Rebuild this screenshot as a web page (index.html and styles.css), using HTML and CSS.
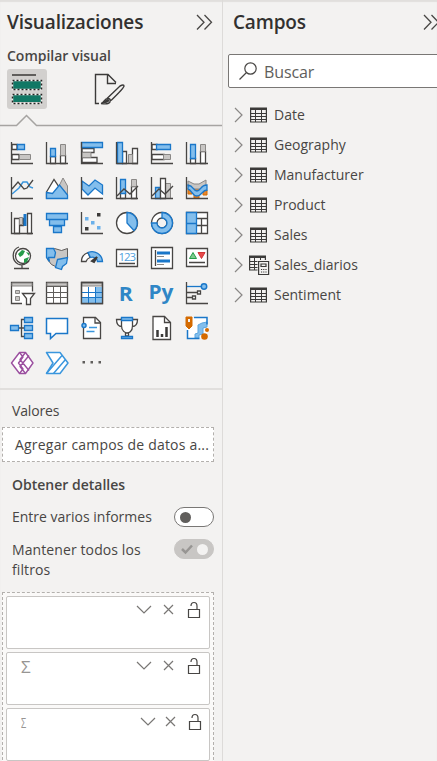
FILE: index.html
```html
<!DOCTYPE html>
<html lang="es">
<head>
<meta charset="utf-8">
<title>Visualizaciones</title>
<link rel="stylesheet" href="styles.css">
</head>
<body>
<div class="app">
<section class="pane viz">
  <header class="head"><h1 class="t-viz">Visualizaciones</h1>
    <svg class="collapse" width="17" height="17" viewBox="0 0 17 17"><path d="M1 1l7 7.3-7 7.2M8.500 1l7 7.300-7 7.200"/></svg></header>
  <h2 class="sub">Compilar visual</h2>
  <div class="tabs">
    <span class="tab active"><svg width="40" height="40"><path d="M5 6h24" stroke="#605e5c" stroke-width="2"/><path d="M6 12h28v8H6zM6 26h28v7H6z" fill="#117865"/><path d="M5.500 11.500h29v9h-29zM5.500 25.500h29v9h-29z" fill="none" stroke="#f3f2f1" stroke-width="1.500"/><path d="M5.500 11.500h29v9h-29zM5.500 25.500h29v9h-29z" fill="none" stroke="#252423" stroke-width="1.500" stroke-dasharray="2 2"/></svg></span>
    <svg class="tab format" width="40" height="40"><g fill="none" stroke="#3b3a39" stroke-width="1.400"><path d="M12 34.500H8.500V5.500H21l8 8M20.500 6v8.500H29M14 34.500c3 0 3-5 7-5 3 0 3 4 0 5-2 .7-4 .5-7 0zM20 29.500L33 17q4-2 4 0 0 2-13 14.500"/></g><path d="M14 34c3 0 4-4 7-4 3 1 1 5-7 4z" fill="#3b3a39"/></svg>
  </div>
  <svg class="pointer" width="222" height="14"><path d="M0 11.500h16.500l10-10 10 10H222" fill="none" stroke="#a6a4a2" stroke-width="1.500"/></svg>
  <div class="gallery">
    <svg><path class="w" d="M2 3.500h5v5H2z"/><path class="b" d="M7.500 3.500h7v5h-7z"/><path class="w" d="M2 13.500h7v5H2z"/><path class="g" d="M9.500 13.500h11v5h-11z"/><path class="k" d="M1.500 1v21.500H23"/></svg>
    <svg><path class="w" d="M5.500 15.500h5v7h-5zM15.500 14.500h5v8h-5z"/><path class="b" d="M5.500 7.500h5v8h-5z"/><path class="g" d="M15.500 3.500h5v11h-5z"/><path class="k" d="M1.500 1v21.500H23"/></svg>
    <svg><path class="w" d="M2 7.500h12v4H2zM2 16.500h15v5H2z"/><path class="g" d="M2 11.500h9v5H2z"/><path class="b" d="M1.500 1.500h21v5h-21z"/><path class="k" d="M1.500 1v21.500H23"/></svg>
    <svg><path class="w" d="M7.500 10.500h4v12h-4zM17.500 7.500h5v15h-5z"/><path class="g" d="M13.500 13.500h4v9h-4z"/><path class="b" d="M2.500 1.500h5v21h-5z"/><path class="k" d="M1.500 1v21.500H23"/></svg>
    <svg><path class="w" d="M2 3.500h5v5H2zM2 13.500h12v5H2z"/><path class="b" d="M6.500 3.500h14v5h-14z"/><path class="g" d="M13.500 13.500h7v5h-7z"/><path class="k" d="M1.500 1v21.500H23"/></svg>
    <svg><path class="w" d="M5.500 17.500h5v5h-5zM15.500 10.500h5v12h-5z"/><path class="b" d="M5.500 3.500h5v14h-5z"/><path class="g" d="M15.500 3.500h5v7h-5z"/><path class="k" d="M1.500 1v21.500H23"/></svg>

    <svg><path class="bl" d="M2 18l7-6 4-6h4l3 5 3 1"/><path class="k" d="M2 13l6-7 6 7 3-1 6-8M1.500 1v21.500H23"/></svg>
    <svg><path class="g" d="M12 14l6-12 4.500 8v12H12z"/><path class="w" d="M1.500 16L9 3.500 16 14 9 22H1.500z"/><path class="b" d="M1.500 16.500l6 1 7-8.500 8 10v3.500h-21z"/></svg>
    <svg><path class="w" d="M2 12l7 5 6-5 8 7v3H2z" style="stroke:none"/><path class="b" d="M2 5l7 5 6-6 7.500 5v9L15 12l-7 7-6-6z"/><path class="k" d="M1.500 1v21.500H23"/></svg>
    <svg><path class="w" d="M5.500 15.500h5v7h-5zM16.500 10.500h5v12h-5z"/><path class="b" d="M5.500 3.500h5v14h-5z"/><path class="g" d="M16.500 3.500h5v7h-5z"/><path class="k" d="M1.500 1v21.500H23M2 20l7-7 6 5 8-8" /></svg>
    <svg><path class="b" d="M5.500 11.500h5v11h-5z"/><path class="g" d="M15.500 7.500h5v15h-5z"/><path class="w" d="M10.500 2.500h5v20h-5z"/><path class="k" d="M1.500 1v21.500H23M2 20l7-7 6 5 8-8"/></svg>
    <svg><path d="M3 12h4v6H3zM9 11h6v4H9zM9 19h5v3H9zM18 14h4v5h-4z" fill="#e8862c" stroke="#d46a00"/><path class="g" d="M3 5l6 3h5l7-4v6l-6 3H9L3 10z"/><path class="b" d="M3 9c6 1 5 6 9 6s3-6 10-6v5c-5 0-5 6-10 6s-5-6-9-7z"/><path class="k" d="M1.500 1v21.500H23"/></svg>

    <svg><path class="w" d="M4.500 7.500h5v15h-5zM9.500 7.500h4v7h-4zM17.500 2.500h4v20h-4z"/><path class="g" d="M9.500 6.500h3v7h-3z"/><path d="M15 3v12" stroke="#1a77c9" stroke-width="3"/><path class="k" d="M1.500 1v21.500H23"/></svg>
    <svg><path class="b" d="M1.500 2.500h21v6h-21zM4.500 8.500h15v6h-15zM8.500 15.500h8v6h-8z"/></svg>
    <svg><path class="k" d="M1.500 1v21.500H23"/><path d="M5 6h3.500v3.500H5zM11 10h3.500v3.500H11zM17 15h3.500v3.500H17z" fill="#6bb0ea"/><path d="M17 2h3.500v3.500H17zM5 16h3.500v3.500H5z" fill="#3b3a39"/></svg>
    <svg><circle class="w" cx="12" cy="12" r="10.500"/><path class="b" d="M12 1.500V12l7 7.500A10.500 10.500 0 0 0 12 1.500z"/></svg>
    <svg><path class="w" fill-rule="evenodd" d="M12 1.500a10.500 10.500 0 1 0 .1 0zM12 7a5 5 0 1 1-.1 0z"/><path class="b" d="M12 1.500A10.500 10.500 0 1 1 1.500 12H7a5 5 0 1 0 5-5z"/></svg>
    <svg><path class="w" d="M1.500 1.500h21v21h-21zM12 7.500h10.500M12 14.500h4M16.500 7.500v15M16.500 14.500h6"/><path class="b" d="M1.500 1.500h10v21h-10zM1.500 12.500h10"/></svg>

    <svg><circle cx="13" cy="10" r="7.500" class="w"/><path d="M8 8l4-4 3 1-2 4-3 2zM14 13l5-2-2 5-3 1zM16 6l3 1v3z" fill="#259c4a"/><path class="k" d="M9 1C2 3 1 14 8 18c4 2 9 0 11-3M12 19v3M4 22.500h15"/></svg>
    <svg><path class="g" d="M1.500 3.500l8-1 7 2 6-2v9l-4 5-6 5-6-3-4-5z" style="stroke:#605e5c"/><path class="b" d="M1.500 2.500l7 0 2 4-1 5h-6l1 4-3-4zM12.500 13.500l10-2-1 6-4 3-1 3-6-2z"/></svg>
    <svg><path class="w" d="M1.500 15.500A10.500 9.500 0 0 1 8 6.500l2 5q-3 1-4 4z"/><path class="b" d="M8 6.500a10.500 10.500 0 0 1 14.500 9h-5c0-3-4-5-7-4z"/><path d="M12 15l5-4-3 5z" fill="#3b3a39" stroke="#3b3a39" stroke-width="2"/></svg>
    <svg><path class="w" d="M1.500 3.500h21v17h-21zM4 17.500h16"/><text x="3.500" y="15" font-size="11.500" fill="#4f9fdd" textLength="17.500">123</text></svg>
    <svg><path class="w" d="M1.500 1.500h21v21h-21z" /><path class="k" d="M5.500 4v16"/><path d="M7 7h13M7 15h13" stroke="#1a77c9" stroke-width="3"/><path class="g" d="M7 10.500h7M7 18.500h7"/></svg>
    <svg><path class="w" d="M1.500 2.500h21v18h-21zM4 16.500h16"/><path d="M4.500 12.500h7L8 6.500z" fill="#7ccb8d" stroke="#259c4a"/><path d="M13 6.500h7l-3.500 6z" fill="#e84b4b" stroke="#d13438"/></svg>

    <svg><path class="w" d="M1.500 1.500h21v10L15 22.500H1.500z" style="stroke:none"/><path class="k" d="M12 22.500H1.500v-21h21v9"/><path class="g" d="M2 2h20v3H2zM5.500 9.500h4v3h-4zM5.500 15.500h4v4h-4z"/><path class="w" d="M12.500 12.500h12l-4 5v6h-4v-6z"/></svg>
    <svg><path class="w" d="M1.500 1.500h21v21h-21z"/><path class="g" d="M2 2h20v3H2z"/><path class="k thin" d="M1.500 5.500h21M1.500 11.500h21M1.500 16.500h21M8.500 5v17M15.500 5v17"/></svg>
    <svg><path class="w" d="M1.500 1.500h21v21h-21z"/><path d="M15 6h7v16H2v-5h13z" fill="#83beec"/><path class="g" d="M2 2h20v3H2z"/><path d="M2 11.500h20M2 16.500h20M8.500 6v16M15.500 6v16" stroke="#1a77c9"/><path class="k" d="M1.500 1.500h21v21h-21z"/></svg>
    <svg><text x="3.800" y="19.500" font-size="20" textLength="14" lengthAdjust="spacingAndGlyphs" class="lang">R</text></svg>
    <svg><text x="-1.500" y="18" font-size="20" textLength="25" lengthAdjust="spacingAndGlyphs" class="lang">Py</text></svg>
    <svg><path class="k" d="M1.500 1v21.500H23M2 11.500h11M2 16.500h6"/><path d="M2 5.500h16" stroke="#1a77c9" stroke-width="1.300"/><circle cx="19" cy="5.500" r="2.700" fill="#83beec" stroke="#1a77c9" stroke-width="1.500"/><path class="w" d="M12.500 10h3v3h-3zM7.500 15h3v3h-3z"/></svg>

    <svg><path class="k" d="M9 12h6M15 3.500h-3.500v17H15"/><path class="b" d="M.5 9.500h8v5h-8zM14.500 1.500h8v5h-8zM14.500 9.500h8v5h-8zM14.500 17.500h8v5h-8z"/></svg>
    <svg><path d="M1.500 2.500h21v15H11l-5.500 5v-5h-4z" fill="#fff" stroke="#1a77c9" stroke-width="1.500"/></svg>
    <svg><path class="w" d="M3.500 1.500h12l5 5v16h-17z"/><path class="k" d="M15 1.500v5.500h5.500"/><circle cx="4" cy="9.500" r="2" fill="#83beec" stroke="#1a77c9" stroke-width="1.500"/><path d="M9 11.500h8M6.500 15.500h8" stroke="#3a96dd" stroke-width="1.300"/></svg>
    <svg><path class="w" d="M6.500 2.500h11V10c0 6-4 7-5.500 7s-5.500-2-5.500-7zM6.500 3.500h-5c0 5 2 7 5.500 7M17.500 3.500h5c0 5-2 7-5.500 7M10.500 17v3h3v-3"/><path class="b" d="M6.500 1.500h11v3h-11zM6.500 20.500h11v2h-11z"/></svg>
    <svg><path class="w" d="M3 .5h11.500l6 6v17H3z"/><path class="k" d="M14.500.5v6h6"/><path d="M7.500 14v7M12 18v3M16.500 11v10" stroke="#3b3a39" stroke-width="2.500"/></svg>
    <svg><path class="w" d="M2 2h20v20H2z" style="stroke:none"/><path d="M10 22v-4l3-1V9l4-2 5-1v5l-4 1v6l-4 1v3z" fill="#83beec" stroke="#5ba5df"/><path d="M9 1.500h13v7M2.500 14v8.500h12" fill="none" stroke="#1a77c9" stroke-width="1.500"/><path d="M1 1h6v9l-3 3-3-3z" fill="#d46a00" stroke="#d46a00"/><path d="M3 3h2v3H3z" fill="#f3f2f1"/><circle cx="22" cy="14" r="2" fill="#d46a00"/><circle cx="19.500" cy="20.500" r="3.300" fill="#d46a00"/></svg>

    <svg><g fill="#fff" stroke="#9b4f9f" stroke-width="1.400" stroke-linejoin="round"><path d="M9.500 1.500h6L23 12l-7.500 10.500h-6L1.500 12z"/><path d="M9.500 1.500L13 6l-4.500 6 4.500 6-3.500 4.500M15.500 1.500L10 8.500l9 11M15.500 22.500L10 15.500l9-11" fill="none"/></g></svg>
    <svg><g fill="#fff" stroke="#3a96dd" stroke-width="1.500" stroke-linejoin="round"><path d="M1.500 1.500h13.500L23 12l-8 10.500H1.500L8 12z"/><path d="M1.500 22.500L17 4.500M8.500 22.500L20.500 8.500" fill="none"/></g></svg>
    <svg><path d="M2.500 10h2.500v2.500H2.500zM10.500 10H13v2.500h-2.500zM18.500 10H21v2.500h-2.500z" fill="#605e5c"/></svg>
  </div>
  <div class="wells">
    <div class="label t-val">Valores</div>
    <div class="drop"><span>Agregar campos de datos a...</span></div>
    <h3 class="label t-det">Obtener detalles</h3>
    <div class="option"><span class="t-ent">Entre varios informes</span><i class="toggle"></i></div>
    <div class="option tall"><span class="t-man">Mantener todos los<br>filtros</span><i class="toggle on"><svg width="14" height="12"><path d="M2 6l3.500 3.500L12 2.500" fill="none" stroke="#979593" stroke-width="2.500"/></svg></i></div>
    <div class="filters">
      <div class="card"><svg width="66" height="18"><path d="M1 5l7 7 7-7M28 4l9 9M37 4l-9 9"/><path class="lock" d="M52.500 8.500h11v8h-11zM55 5q0-3.500 3-3.500t3 3.500v3"/></svg></div>
      <div class="card"><b>Σ</b><svg width="66" height="18"><path d="M1 5l7 7 7-7M28 4l9 9M37 4l-9 9"/><path class="lock" d="M52.500 8.500h11v8h-11zM55 5q0-3.500 3-3.500t3 3.500v3"/></svg></div>
      <div class="card cut"><b>Σ</b><svg width="62" height="18"><path d="M1 5l7 7 7-7M26 4l9 9M35 4l-9 9"/><path class="lock" d="M49.500 8.500h11v8h-11zM52 5q0-3.500 3-3.500t3 3.500v3"/></svg></div>
    </div>
  </div>
</section>
<section class="pane fields">
  <header class="head"><h1 class="t-cam">Campos</h1>
    <svg class="collapse" width="17" height="17" viewBox="0 0 17 17"><path d="M1 1l7 7.300-7 7.200M8.500 1l7 7.300-7 7.200"/></svg></header>
  <div class="search"><svg width="20" height="20"><g fill="none" stroke="#484644" stroke-width="1.200"><circle cx="12.500" cy="7.500" r="5.700"/><path d="M8.500 11.500L1.500 18.500"/></g></svg><span>Buscar</span></div>
  <svg width="0" height="0" class="defs"><defs>
    <g id="chev"><path d="M1 1l7 7-7 7" fill="none" stroke="#8a8886" stroke-width="1.200"/></g>
    <g id="tbl"><path d="M.6 1h15.800v14H.6z" fill="#f3f2f1" stroke="#3b3a39" stroke-width="1.200"/><path d="M1 2h15" stroke="#3b3a39" stroke-width="2"/><path d="M1 6.500h15M1 9.500h15M1 12.500h15M5.500 3v12M11.500 3v12" stroke="#3b3a39"/></g>
  </defs></svg>
  <ul class="tree">
    <li><svg class="chev"><use href="#chev"/></svg><svg class="tbl"><use href="#tbl"/></svg><span class="f1">Date</span></li>
    <li><svg class="chev"><use href="#chev"/></svg><svg class="tbl"><use href="#tbl"/></svg><span class="f2">Geography</span></li>
    <li><svg class="chev"><use href="#chev"/></svg><svg class="tbl"><use href="#tbl"/></svg><span class="f3">Manufacturer</span></li>
    <li><svg class="chev"><use href="#chev"/></svg><svg class="tbl"><use href="#tbl"/></svg><span class="f4">Product</span></li>
    <li><svg class="chev"><use href="#chev"/></svg><svg class="tbl"><use href="#tbl"/></svg><span class="f5">Sales</span></li>
    <li><svg class="chev"><use href="#chev"/></svg><svg class="tbl"><use href="#tbl" x="-1" y="-2"/><path d="M7.500 3h12v16h-12z" fill="#f3f2f1"/><path d="M8.600 4.500h10v13h-10zM11 7h5v2.500h-5z" fill="none" stroke="#3b3a39" stroke-width="1.200"/><path d="M11 12.500h6M11 15h6" stroke="#3b3a39" stroke-dasharray="1.200 1"/></svg><span class="f6">Sales_diarios</span></li>
    <li><svg class="chev"><use href="#chev"/></svg><svg class="tbl"><use href="#tbl"/></svg><span class="f7">Sentiment</span></li>
  </ul>
</section>
</div>
</body>
</html>
```
FILE: styles.css
```css
* { box-sizing: border-box; }
body { margin: 0; background: #f3f2f1; color: #484644; font: 14px/20px "Open Sans", "Noto Sans", sans-serif; overflow: hidden; }
h1, h2, h3, ul { margin: 0; padding: 0; font-weight: 600; }
svg { display: block; flex: none; overflow: visible; }
.app { display: flex; width: 437px; height: 761px; overflow: hidden; box-shadow: inset 0 2px 1px #e1dfdd; }
.pane { height: 761px; white-space: nowrap; }
.viz { width: 223px; flex: none; border-right: 1px solid #dddbd9; }
.fields { flex: 1; min-width: 0; }
.head { display: flex; justify-content: space-between; align-items: center; height: 44px; padding: 0 9px 0 7px; }
.fields .head { padding: 0 0 0 10px; }
.fields .collapse { margin-right: -3px; }
h1 { font-size: 19px; color: #323130; letter-spacing: -.17px; }
.collapse path { fill: none; stroke: #484644; stroke-width: 1.3; }
.sub { height: 25px; padding-left: 7px; font-size: 14px; line-height: 23px; letter-spacing: -.02px; }
.tabs { display: flex; gap: 40px; padding-left: 7px; }
.tab { width: 40px; height: 40px; }
.active { background: #d2d0ce; border-radius: 3px; }
.pointer { margin-top: 5px; }
.gallery { display: grid; grid-template-columns: repeat(6, 24px); gap: 11px; padding: 13px 0 0 10px; height: 260px; align-content: start; }
.gallery svg { width: 24px; height: 24px; }
.k { fill: none; stroke: #484644; stroke-width: 1.3; }
.k.thin { stroke: #605e5c; stroke-width: 1; }
.w { fill: #fff; stroke: #484644; stroke-width: 1.3; }
.g { fill: #c8c6c4; stroke: #8a8886; }
.b { fill: #83beec; stroke: #1a77c9; stroke-width: 1.3; }
.bl { fill: none; stroke: #3a96dd; stroke-width: 1.5; }
.lang { fill: #2f86c6; font-weight: 700; }
.wells { border-top: 2px solid #e1dfdd; padding: 11px 8px 0 2px; }
.label { padding-left: 10px; height: 20px; font-size: 14px; }
.t-val { letter-spacing: -.15px; }
.t-man { letter-spacing: .1px; }
.drop { height: 35px; margin: 6px 0 13px; padding-left: 12px; border: 1px dashed #b3b0ad; background: #fff; line-height: 34px; letter-spacing: .2px; }
.option { display: flex; justify-content: space-between; align-items: flex-start; padding-left: 10px; margin-top: 12px; height: 20px; }
.option.tall { height: 40px; margin-top: 13px; }
.toggle { width: 40px; height: 20px; border: 1px solid #797775; border-radius: 10px; background: #fff; display: flex; align-items: center; padding-left: 5px; }
.toggle::after { content: ""; width: 11px; height: 11px; border-radius: 50%; background: #605e5c; }
.toggle.on { background: #c8c6c4; border-color: #c8c6c4; margin-top: -1px; gap: 3px; }
.toggle.on::after { background: #f3f2f1; }
.filters { display: grid; gap: 3px; margin-top: 12px; padding: 3px; border: 1px dashed #b3b0ad; background: #faf9f8; }
.card { display: flex; height: 53px; border: 1px solid #c8c6c4; border-radius: 2px; background: #fff; padding: 4px 7px 0 14px; }
.card svg { margin-left: auto; }
.card path { fill: none; stroke: #797775; stroke-width: 1.2; }
.card .lock { stroke: #484644; }
.card b { font: 17px/20px "Open Sans", sans-serif; color: #979593; }
.cut b { font-size: 14px; transform: scaleX(.65); transform-origin: 0 50%; }
.search { display: flex; align-items: center; gap: 6px; width: 225px; height: 34px; margin: 10px 0 0 5px; padding-left: 9px; border: 1px solid #797775; border-radius: 2px; background: #fff; font-size: 16px; color: #605e5c; }
.search span { letter-spacing: -.1px; padding-top: 1px; }
.defs { position: absolute; }
.tree { margin-top: 12px; list-style: none; font-weight: 400; }
.tree li { display: flex; align-items: center; height: 30px; padding-left: 11px; }
.chev { width: 9px; height: 16px; margin-right: 7px; }
.tbl { width: 18px; height: 16px; margin-right: 6px; }
```
